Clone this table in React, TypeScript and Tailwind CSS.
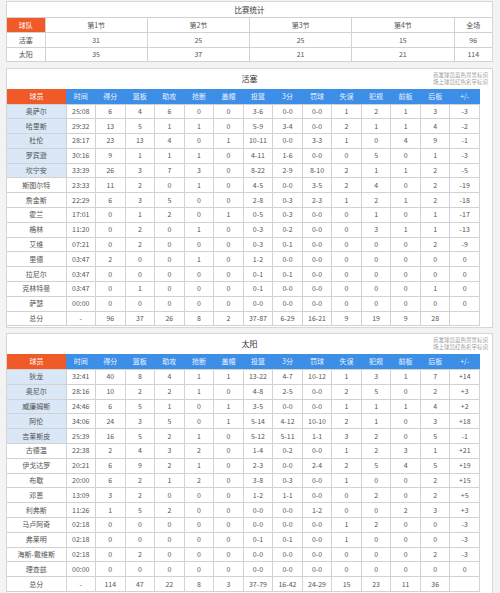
import React from 'react';

type Row = (string | number)[];

const quarters = [
  { team: '活塞', q: [31, 25, 25, 15], total: 96 },
  { team: '太阳', q: [35, 37, 21, 21], total: 114 },
];

const heads = ['时间', '得分', '篮板', '助攻', '抢断', '盖帽', '投篮', '3分', '罚球', '失误', '犯规', '前板', '后板', '+/-'];

const pistons: Row[] = [
  ['奥萨尔', '25:08', 6, 4, 6, 0, 0, '3-6', '0-0', '0-0', 1, 2, 1, 3, -3],
  ['哈里斯', '29:32', 13, 5, 1, 1, 0, '5-9', '3-4', '0-0', 2, 1, 1, 4, -2],
  ['杜伦', '28:17', 23, 13, 4, 0, 1, '10-11', '0-0', '3-3', 1, 0, 4, 9, -1],
  ['罗宾逊', '30:16', 9, 1, 1, 1, 0, '4-11', '1-6', '0-0', 0, 5, 0, 1, -3],
  ['坎宁安', '33:39', 26, 3, 7, 3, 0, '8-22', '2-9', '8-10', 2, 1, 1, 2, -5],
  ['斯图尔特', '23:33', 11, 2, 0, 1, 0, '4-5', '0-0', '3-5', 2, 4, 0, 2, -19],
  ['詹金斯', '22:29', 6, 3, 5, 0, 0, '2-8', '0-3', '2-3', 1, 2, 1, 2, -18],
  ['霍兰', '17:01', 0, 1, 2, 0, 1, '0-5', '0-3', '0-0', 0, 1, 0, 1, -17],
  ['格林', '11:20', 0, 2, 0, 1, 0, '0-3', '0-2', '0-0', 0, 3, 1, 1, -13],
  ['艾维', '07:21', 0, 2, 0, 0, 0, '0-3', '0-1', '0-0', 0, 0, 0, 2, -9],
  ['里德', '03:47', 2, 0, 0, 1, 0, '1-2', '0-0', '0-0', 0, 0, 0, 0, 0],
  ['拉尼尔', '03:47', 0, 0, 0, 0, 0, '0-1', '0-1', '0-0', 0, 0, 0, 0, 0],
  ['克林特曼', '03:47', 0, 1, 0, 0, 0, '0-1', '0-0', '0-0', 0, 0, 0, 1, 0],
  ['萨瑟', '00:00', 0, 0, 0, 0, 0, '0-0', '0-0', '0-0', 0, 0, 0, 0, 0],
  ['总分', '-', 96, 37, 26, 8, 2, '37-87', '6-29', '16-21', 9, 19, 9, 28, ''],
];

const suns: Row[] = [
  ['狄龙', '32:41', 40, 8, 4, 1, 1, '13-22', '4-7', '10-12', 1, 3, 1, 7, '+14'],
  ['奥尼尔', '28:16', 10, 2, 2, 1, 0, '4-8', '2-5', '0-0', 2, 5, 0, 2, '+3'],
  ['威廉姆斯', '24:46', 6, 5, 1, 0, 1, '3-5', '0-0', '0-0', 1, 1, 1, 4, '+2'],
  ['阿伦', '34:06', 24, 3, 5, 0, 1, '5-14', '4-12', '10-10', 2, 1, 0, 3, '+18'],
  ['吉莱斯皮', '25:39', 16, 5, 2, 1, 0, '5-12', '5-11', '1-1', 3, 2, 0, 5, -1],
  ['古德温', '22:38', 2, 4, 3, 2, 0, '1-4', '0-2', '0-0', 1, 2, 3, 1, '+21'],
  ['伊戈达罗', '20:21', 6, 9, 2, 1, 0, '2-3', '0-0', '2-4', 2, 5, 4, 5, '+19'],
  ['布歇', '20:00', 6, 2, 1, 2, 0, '3-8', '0-3', '0-0', 1, 0, 0, 2, '+15'],
  ['邓恩', '13:09', 3, 2, 0, 0, 0, '1-2', '1-1', '0-0', 0, 2, 0, 2, '+5'],
  ['利弗斯', '11:26', 1, 5, 2, 0, 0, '0-0', '0-0', '1-2', 0, 0, 2, 3, '+3'],
  ['马卢阿奇', '02:18', 0, 0, 0, 0, 0, '0-0', '0-0', '0-0', 1, 2, 0, 0, -3],
  ['弗莱明', '02:18', 0, 0, 0, 0, 0, '0-1', '0-1', '0-0', 1, 0, 0, 0, -3],
  ['海斯-戴维斯', '02:18', 0, 2, 0, 0, 0, '0-0', '0-0', '0-0', 0, 0, 0, 2, -3],
  ['理查兹', '00:00', 0, 0, 0, 0, 0, '0-0', '0-0', '0-0', 0, 0, 0, 0, 0],
  ['总分', '-', 114, 47, 22, 8, 3, '37-79', '16-42', '24-29', 15, 23, 11, 36, ''],
];

function TeamCard({ name, rows }: { name: string; rows: Row[] }) {
  return (
    <div className="border border-[#d6d6d6] bg-white">
      <div className="relative h-[20px] flex items-center justify-center text-[8px] text-[#333]">
        {name}
        <div className="absolute right-[4px] top-[3px] text-right text-[5.5px] leading-[6.5px] text-[#9a9a9a]">
          <div>首发球员蓝色背景标识</div>
          <div>场上球员红色名字标识</div>
        </div>
      </div>
      <table className="w-[473px] table-fixed border-collapse text-[7px] text-[#555]">
        <colgroup>
          <col className="w-[59px]" />
          {heads.map(h => <col key={h} />)}
        </colgroup>
        <thead>
          <tr className="h-[15px]">
            <th className="bg-[#ef5a28] font-normal text-white">球员</th>
            {heads.map(h => (
              <th key={h} className="bg-[#3d8ee6] font-normal text-[#eaf3ff]">{h}</th>
            ))}
          </tr>
        </thead>
        <tbody>
          {rows.map((r, i) => (
            <tr key={i} className="h-[14.8px]">
              {r.map((c, j) => (
                <td
                  key={j}
                  className={`border border-[#d2d2d2] p-0 text-center leading-none ${j === 0 && i < 5 ? 'bg-[#d9e7f6]' : ''} ${j === 0 ? 'border-l-0' : ''}`}
                >
                  {c}
                </td>
              ))}
            </tr>
          ))}
        </tbody>
      </table>
      <div className="h-[1px]" />
    </div>
  );
}

export default function App() {
  return (
    <div
      className="w-[500px] h-[593px] overflow-hidden bg-[#f3f3f3] pl-[6px] pr-[7px] pt-[1px]"
      style={{ fontFamily: '"Noto Sans CJK SC", "Noto Sans", sans-serif' }}
    >
      <div className="border border-[#d6d6d6] border-b-0 bg-white">
        <div className="h-[15px] flex items-center justify-center text-[7.5px] text-[#333]">比赛统计</div>
        <table className="w-full table-fixed border-collapse text-[7px] text-[#555]">
          <colgroup>
            <col className="w-[38px]" />
            <col />
            <col />
            <col />
            <col />
            <col className="w-[38px]" />
          </colgroup>
          <tbody>
            <tr className="h-[15px]">
              <td className="bg-[#ef5a28] text-center text-white border border-l-0 border-[#d2d2d2]">球队</td>
              {['第1节', '第2节', '第3节', '第4节', '全场'].map(h => (
                <td key={h} className="border border-[#d2d2d2] text-center border-r-0">{h}</td>
              ))}
            </tr>
            {quarters.map(t => (
              <tr key={t.team} className="h-[14.5px]">
                <td className="border border-l-0 border-[#d2d2d2] text-center">{t.team}</td>
                {t.q.map((v, k) => (
                  <td key={k} className="border border-[#d2d2d2] text-center">{v}</td>
                ))}
                <td className="border border-r-0 border-[#d2d2d2] text-center">{t.total}</td>
              </tr>
            ))}
          </tbody>
        </table>
      </div>
      <div className="mt-[6px] flex flex-col gap-[5px]">
        <TeamCard name="活塞" rows={pistons} />
        <TeamCard name="太阳" rows={suns} />
      </div>
    </div>
  );
}
